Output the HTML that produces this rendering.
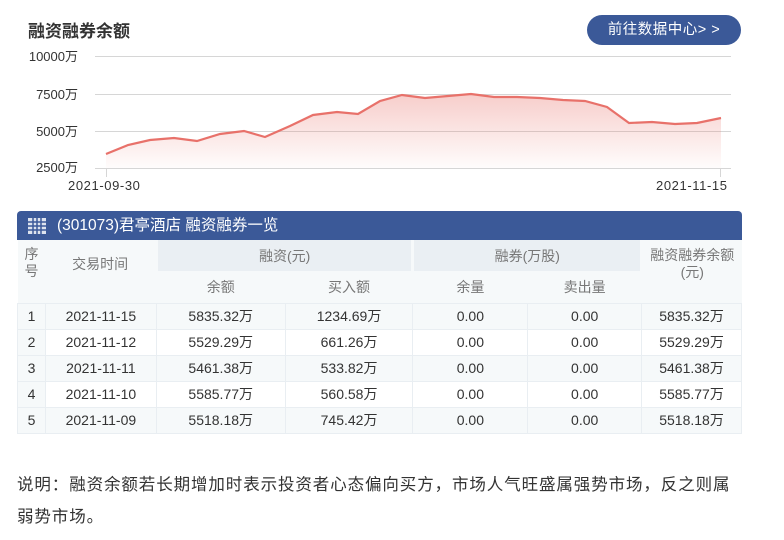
<!DOCTYPE html>
<html><head><meta charset="utf-8"><style>
*{margin:0;padding:0;box-sizing:border-box}
body{width:784px;height:540px;background:#fff;font-family:"Liberation Sans","Noto Sans CJK SC",sans-serif;color:#333;position:relative;overflow:hidden}
.title{position:absolute;left:28px;top:17px;font-size:17px;font-weight:bold;color:#333}
.btn{position:absolute;left:587px;top:15px;width:154px;height:30px;border-radius:15px;background:#3b5998;color:#fff;font-size:14.5px;line-height:30px;text-align:center;letter-spacing:0.5px}
.yl{position:absolute;font-size:13px;color:#333;text-align:right;width:72px;left:6px}
.hdr{position:absolute;left:17px;top:211px;width:725px;height:29px;background:#3b5998;border-radius:4px 4px 0 0;color:#fff;font-size:15.5px;line-height:29px;padding-left:40px}
table{position:absolute;left:17px;top:240px;width:725px;border-collapse:collapse;font-size:14px}
td{border:1px solid #e9eef2;text-align:center;height:26px;color:#333;line-height:16px}
.h td{color:#777;background:#f6f9fa;border:none}
.g{background:#f6f9fa}
.note{position:absolute;left:17px;top:469px;width:730px;font-size:16.5px;line-height:32px;color:#333;letter-spacing:0.9px}
</style></head><body>
<div class="title">融资融券余额</div>
<div class="btn">前往数据中心&gt; &gt;</div>
<div class="yl" style="top:46px">10000万</div>
<div class="yl" style="top:84px">7500万</div>
<div class="yl" style="top:121px">5000万</div>
<div class="yl" style="top:157px">2500万</div>
<svg style="position:absolute;left:0;top:0" width="784" height="200">
<defs><linearGradient id="gr" x1="0" y1="0" x2="0" y2="1"><stop offset="0" stop-color="#e8716a" stop-opacity="0.35"/><stop offset="1" stop-color="#e8716a" stop-opacity="0.02"/></linearGradient></defs>
<g stroke="#d6d6d6" stroke-width="1"><line x1="95" y1="56.5" x2="731" y2="56.5"/><line x1="95" y1="94.5" x2="731" y2="94.5"/><line x1="95" y1="131.5" x2="731" y2="131.5"/><line x1="95" y1="168.5" x2="731" y2="168.5"/><line x1="106.5" y1="168" x2="106.5" y2="177"/><line x1="720.5" y1="168" x2="720.5" y2="177"/></g>
<path d="M106,154 L128,145 L150,140 L174,138 L197,141 L220,134 L244,131 L265,137 L290,126 L313,115 L337,112 L358,114 L380,101 L402,95 L425,98 L448,96 L471,94 L494,97 L517,97 L540,98 L563,100 L585,101 L607,107 L629,123 L652,122 L675,124 L697,123 L721,118 L721,168 L106,168Z" fill="url(#gr)"/>
<path d="M106,154 L128,145 L150,140 L174,138 L197,141 L220,134 L244,131 L265,137 L290,126 L313,115 L337,112 L358,114 L380,101 L402,95 L425,98 L448,96 L471,94 L494,97 L517,97 L540,98 L563,100 L585,101 L607,107 L629,123 L652,122 L675,124 L697,123 L721,118" fill="none" stroke="#e8716a" stroke-width="2.2"/>
<text x="68" y="190" font-size="13" fill="#333" font-family="Liberation Sans,sans-serif" letter-spacing="0.6">2021-09-30</text>
<text x="656" y="190" font-size="13" fill="#333" font-family="Liberation Sans,sans-serif" letter-spacing="0.6">2021-11-15</text>
</svg>
<div class="hdr">(301073)君亭酒店 融资融券一览</div>
<svg style="position:absolute;left:28px;top:218px" width="18" height="16"><rect x="0" y="0" width="18" height="16" fill="#dde3ee"/><g stroke="#3b5998" stroke-width="1.5"><line x1="0" y1="4" x2="18" y2="4"/><line x1="0" y1="8" x2="18" y2="8"/><line x1="0" y1="12" x2="18" y2="12"/><line x1="5" y1="0" x2="5" y2="16"/><line x1="9" y1="0" x2="9" y2="16"/><line x1="13" y1="0" x2="13" y2="16"/></g></svg>
<table>
<tr class="h" style="height:31px"><td rowspan="2" style="width:28px;vertical-align:top;padding-top:6px;line-height:17px">序<br>号</td><td rowspan="2" style="width:111px;vertical-align:top;padding-top:16px">交易时间</td><td colspan="2" style="background:#eaeff3;border-left:3px solid #f6f9fa;border-right:3px solid #f6f9fa">融资(元)</td><td colspan="2" style="background:#eaeff3;border-left:3px solid #f6f9fa;border-right:3px solid #f6f9fa">融券(万股)</td><td rowspan="2" style="width:100px;vertical-align:top;padding-top:7px;line-height:17px">融资融券余额<br>(元)</td></tr>
<tr class="h" style="height:32px"><td style="width:129px">余额</td><td style="width:128px">买入额</td><td style="width:115px">余量</td><td style="width:114px">卖出量</td></tr>
<tr class="g"><td>1</td><td>2021-11-15</td><td>5835.32万</td><td>1234.69万</td><td>0.00</td><td>0.00</td><td>5835.32万</td></tr>
<tr><td class="g">2</td><td>2021-11-12</td><td>5529.29万</td><td>661.26万</td><td>0.00</td><td>0.00</td><td>5529.29万</td></tr>
<tr class="g"><td>3</td><td>2021-11-11</td><td>5461.38万</td><td>533.82万</td><td>0.00</td><td>0.00</td><td>5461.38万</td></tr>
<tr><td class="g">4</td><td>2021-11-10</td><td>5585.77万</td><td>560.58万</td><td>0.00</td><td>0.00</td><td>5585.77万</td></tr>
<tr class="g"><td>5</td><td>2021-11-09</td><td>5518.18万</td><td>745.42万</td><td>0.00</td><td>0.00</td><td>5518.18万</td></tr>
</table>
<div class="note">说明：融资余额若长期增加时表示投资者心态偏向买方，市场人气旺盛属强势市场，反之则属弱势市场。</div>
</body></html>
